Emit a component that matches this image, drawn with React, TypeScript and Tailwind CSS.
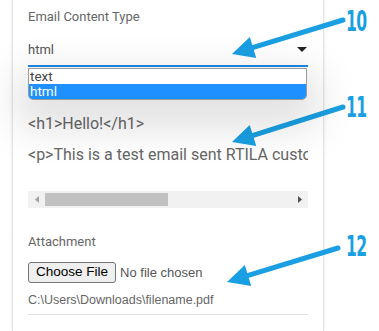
import React from 'react';

const BLUE = '#1a9fe2';

const Callout = ({ n, top, x1, y1, x2, y2 }: { n: string; top: number; x1: number; y1: number; x2: number; y2: number }) => {
  const dx = x2 - x1;
  const dy = y2 - y1;
  const len = Math.sqrt(dx * dx + dy * dy);
  const ux = dx / len;
  const uy = dy / len;
  const bx = x2 - ux * 22;
  const by = y2 - uy * 22;
  const px = -uy * 11;
  const py = ux * 11;
  return (
    <>
      <svg className="absolute left-0 top-0 pointer-events-none" width="379" height="331">
        <line x1={x1} y1={y1} x2={bx + ux * 4} y2={by + uy * 4} stroke={BLUE} strokeWidth="5" strokeLinecap="round" />
        <polygon points={`${x2},${y2} ${bx + px},${by + py} ${bx - px},${by - py}`} fill={BLUE} />
      </svg>
      <div
        className="absolute left-[346px] text-[28px] leading-none font-bold tracking-[-1px] origin-left scale-x-[0.62]"
        style={{ top, color: BLUE, fontFamily: '"DejaVu Sans Condensed", "DejaVu Sans", sans-serif' }}
      >
        {n}
      </div>
    </>
  );
};

export default function App() {
  return (
    <div className="relative w-[379px] h-[331px] bg-white overflow-hidden" style={{ fontFamily: 'Roboto, "Liberation Sans", sans-serif' }}>
      <div className="ml-[12px] w-[312px] h-full bg-white border-x border-[#e4e4e4] shadow-[0_0_4px_rgba(0,0,0,0.08)] px-[15px] pt-[9px]">
        <div className="text-[13px] leading-[16px] text-[#666]">Email Content Type</div>

        {/* select */}
        <div className="relative mt-[17px]">
          <div className="flex items-center justify-between h-[16px] text-[13px] text-[#555]">
            <span>html</span>
            <svg width="10" height="6" viewBox="0 0 10 6" className="mr-[1px]">
              <polygon points="0,0 10,0 5,5" fill="#222" />
            </svg>
          </div>
          <div className="mt-[7px] h-[2px] bg-[#1e88e5]" />
          <div className="absolute left-0 right-[1px] top-[26px] z-10 bg-white border border-[#9a9a9a] rounded-b-[5px] overflow-hidden shadow-[0_16px_40px_12px_rgba(0,0,0,0.12)] text-[13.5px] leading-[15px]">
            <div className="pl-[1px] text-[#444]">text</div>
            <div className="pl-[1px] bg-[#1e90ff] text-white">html</div>
          </div>
        </div>

        {/* textarea */}
        <div className="mt-[48px] text-[16px] leading-[18px] text-[#666] whitespace-nowrap overflow-hidden">
          <div>&lt;h1&gt;Hello!&lt;/h1&gt;</div>
          <div className="mt-[13px]">&lt;p&gt;This is a test email sent RTILA custom</div>
        </div>

        {/* scrollbar */}
        <div className="mt-[27px] h-[17px] bg-[#f1f1f1] flex items-center">
          <div className="w-[17px] flex justify-center">
            <svg width="4" height="7" viewBox="0 0 4 7"><polygon points="4,0 4,7 0,3.5" fill="#a3a3a3" /></svg>
          </div>
          <div className="w-[123px] h-[13px] bg-[#c1c1c1]" />
          <div className="flex-1" />
          <div className="w-[17px] flex justify-center">
            <svg width="4" height="7" viewBox="0 0 4 7"><polygon points="0,0 0,7 4,3.5" fill="#505050" /></svg>
          </div>
        </div>

        {/* attachment */}
        <div className="mt-[26px] text-[13px] leading-[16px] text-[#666]">Attachment</div>
        <div className="mt-[12px] flex items-center" style={{ fontFamily: '"Liberation Sans", Arial, sans-serif' }}>
          <div className="h-[21px] px-[7px] flex items-center border border-[#767676] rounded-[3px] bg-[#efefef] text-[13.5px] text-black">Choose File</div>
          <span className="ml-[4px] text-[13px] text-[#555]">No file chosen</span>
        </div>
        <div className="mt-[10px] text-[12.5px] leading-[14px] text-[#666]" style={{ fontFamily: '"Liberation Sans", Arial, sans-serif' }}>
          C:\Users\Downloads\filename.pdf
        </div>
        <div className="mt-[7px] h-px bg-[#e0e0e0]" />
      </div>

      <Callout n="10" top={8} x1={343} y1={20} x2={232} y2={54} />
      <Callout n="11" top={94} x1={343} y1={107} x2={232} y2={142} />
      <Callout n="12" top={233} x1={338} y1={248} x2={227} y2={282} />
    </div>
  );
}
